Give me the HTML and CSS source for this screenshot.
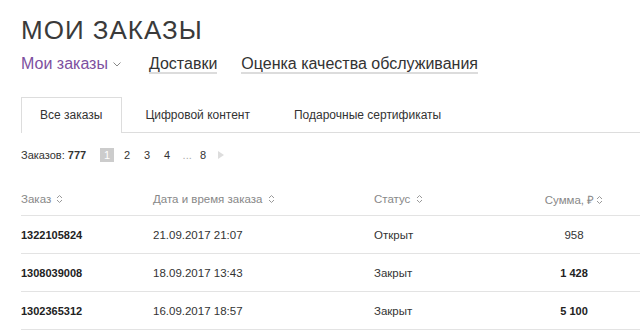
FILE: index.html
```html
<!DOCTYPE html>
<html lang="ru">
<head>
    <meta charset="utf-8">
    <title>Мои заказы</title>
    <link rel="stylesheet" href="styles.css">
</head>
<body>
    <div class="page">
        <h1 class="title">МОИ ЗАКАЗЫ</h1>

        <nav class="subnav">
            <a class="subnav-item active" href="#">Мои заказы
                <svg class="chev" width="8" height="5" viewBox="0 0 8 5"><path d="M0.5 0.5 L4 4 L7.5 0.5" fill="none" stroke="#888" stroke-width="1"/></svg>
            </a>
            <a class="subnav-item link" href="#">Доставки</a>
            <a class="subnav-item link" href="#">Оценка качества обслуживания</a>
        </nav>

        <div class="tabs">
            <div class="tab active">Все заказы</div>
            <div class="tab">Цифровой контент</div>
            <div class="tab">Подарочные сертификаты</div>
        </div>

        <div class="pager-row">
            <span class="count">Заказов: <b>777</b></span>
            <div class="pager">
                <span class="page-num current">1</span>
                <span class="page-num">2</span>
                <span class="page-num">3</span>
                <span class="page-num">4</span>
                <span class="page-num dots">...</span>
                <span class="page-num">8</span>
                <svg class="next" width="6" height="8" viewBox="0 0 6 8"><path d="M0 0 L6 4 L0 8 Z" fill="#ddd"/></svg>
            </div>
        </div>

        <table class="orders">
            <thead>
                <tr>
                    <th class="c-id">Заказ <span class="sort"></span></th>
                    <th class="c-date">Дата и время заказа <span class="sort"></span></th>
                    <th class="c-status">Статус <span class="sort"></span></th>
                    <th class="c-sum">Сумма, ₽<span class="sort"></span></th>
                    <th class="c-pad"></th>
                </tr>
            </thead>
            <tbody>
                <tr>
                    <td class="c-id"><b>1322105824</b></td>
                    <td class="c-date">21.09.2017 21:07</td>
                    <td class="c-status">Открыт</td>
                    <td class="c-sum">958</td>
                    <td class="c-pad"></td>
                </tr>
                <tr>
                    <td class="c-id"><b>1308039008</b></td>
                    <td class="c-date">18.09.2017 13:43</td>
                    <td class="c-status">Закрыт</td>
                    <td class="c-sum"><b>1 428</b></td>
                    <td class="c-pad"></td>
                </tr>
                <tr>
                    <td class="c-id"><b>1302365312</b></td>
                    <td class="c-date">16.09.2017 18:57</td>
                    <td class="c-status">Закрыт</td>
                    <td class="c-sum"><b>5 100</b></td>
                    <td class="c-pad"></td>
                </tr>
            </tbody>
        </table>
    </div>
</body>
</html>
```

FILE: styles.css
```css
body {
    margin: 0;
    background-color: #fff;
    font-family: "Liberation Sans", Arial, sans-serif;
    color: #333;
    overflow: hidden;
}

.page {
    padding: 15px 0 0 21px;
}

.title {
    margin: 0;
    font-size: 26px;
    font-weight: normal;
    letter-spacing: 1px;
    line-height: 30px;
    color: #3a3a3a;
}

.subnav {
    display: flex;
    align-items: center;
    gap: 24px;
    margin-top: 9px;
    height: 22px;
}

.subnav-item {
    font-size: 16px;
    color: #333;
    text-decoration: none;
    line-height: 16px;
}

.subnav-item.active {
    color: #7d4fa0;
    display: flex;
    align-items: center;
    gap: 5px;
    margin-right: 4px;
    padding-bottom: 2px;
}

.subnav-item.link {
    border-bottom: 2px solid #dcdcdc;
}

.tabs {
    display: flex;
    margin-top: 21px;
    border-bottom: 1px solid #ddd;
    height: 35px;
}

.tab {
    padding: 0 20px 0 22px;
    font-size: 12px;
    line-height: 34px;
    color: #333;
    border: 1px solid transparent;
    border-bottom: none;
}

.tab.active {
    padding: 0 19px 0 18px;
    border-color: #ddd;
    background-color: #fff;
    height: 35px;
    margin-bottom: -1px;
}

.pager-row {
    display: flex;
    align-items: center;
    height: 44px;
    font-size: 11px;
}

.count b {
    color: #333;
}

.pager {
    display: flex;
    align-items: center;
    margin-left: 14px;
}

.page-num {
    width: 14px;
    height: 14px;
    line-height: 14px;
    text-align: center;
    margin-right: 6px;
    font-size: 11px;
    color: #333;
}

.page-num.current {
    background-color: #ccc;
    color: #fff;
}

.page-num.dots {
    width: 14px;
    color: #aaa;
    margin-right: 2px;
}

.next {
    margin-left: 2px;
}

.orders {
    border-collapse: collapse;
    width: 619px;
    table-layout: fixed;
    margin-top: 6px;
    font-size: 11.5px;
}

.orders th {
    font-weight: normal;
    color: #888;
    text-align: left;
    height: 32px;
    border-bottom: 1px solid #e3e3e3;
    padding: 0;
}

.orders td {
    height: 37px;
    border-bottom: 1px solid #e3e3e3;
    padding: 0;
    color: #333;
}

.orders b {
    color: #222;
    font-size: 11px;
}

.c-id {
    width: 132px;
}

.c-date {
    width: 221px;
}

.c-status {
    width: 146px;
}

.orders .c-sum {
    width: 108px;
    text-align: center;
}

.sort {
    display: inline-block;
    width: 7px;
    height: 10px;
    vertical-align: -1px;
    margin-left: 2px;
    background: url("data:image/svg+xml;utf8,<svg xmlns='http://www.w3.org/2000/svg' width='7' height='10' viewBox='0 0 7 10'><path d='M1 4 L3.5 1.5 L6 4 M1 6 L3.5 8.5 L6 6' fill='none' stroke='%23999' stroke-width='1'/></svg>") no-repeat;
}
```
